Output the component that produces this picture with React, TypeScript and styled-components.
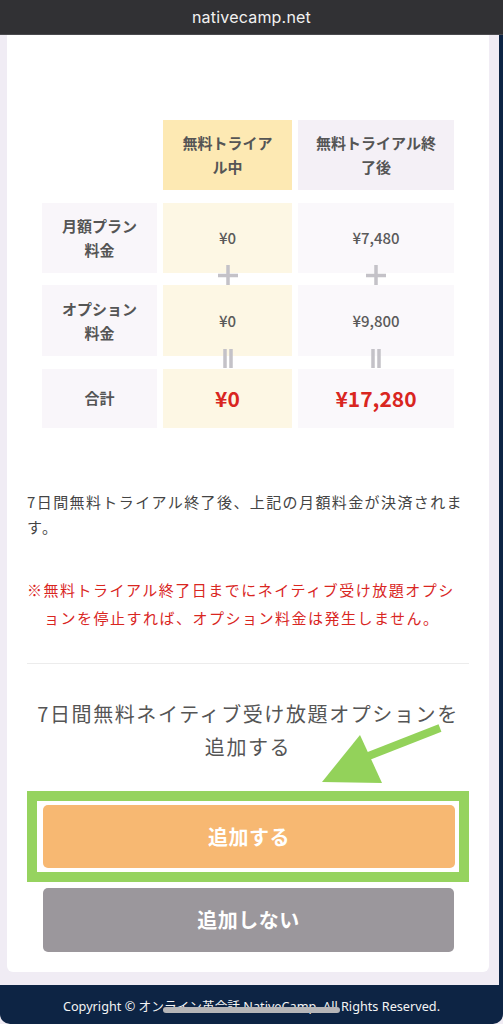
import styled, { createGlobalStyle } from "styled-components";

const GlobalStyle = createGlobalStyle`
  html, body {
    margin: 0;
    padding: 0;
    background: #000;
  }
  * {
    box-sizing: border-box;
  }
`;

const jp = `"Noto Sans CJK JP", "Noto Sans", sans-serif`;

const Page = styled.div`
  display: flex;
  flex-direction: column;
  width: 503px;
  height: 1024px;
  font-family: ${jp};
  background: #f0ecf4;
`;

const TopBar = styled.div`
  height: 35px;
  display: flex;
  align-items: center;
  justify-content: center;
  background: #313134;
  border-bottom: 1px solid #4a4a4e;
  color: #f1f1f1;
  font-family: Inter, "Noto Sans", sans-serif;
  font-size: 16px;
  letter-spacing: 0.2px;
`;

const Main = styled.div`
  flex: 1;
  display: flex;
  padding: 0 10px 13px 7px;
  border-right: 4px solid #0d2444;
`;

const Card = styled.div`
  flex: 1;
  display: flex;
  flex-direction: column;
  background: #fff;
  border-radius: 0 0 6px 6px;
  padding: 85px 20px 20px;
`;

const Table = styled.div`
  display: grid;
  grid-template-columns: 115px 129px 156px;
  grid-template-rows: 70px 70px 71px 59px;
  column-gap: 6px;
  row-gap: 12.5px;
  margin: 0 auto;
`;

const cellBg = {
  label: "#f9f6fa",
  trial: "#fdf7e4",
  after: "#faf8fb",
  trialHead: "#fde9b3",
  afterHead: "#f4f0f6",
  none: "transparent",
};

const Cell = styled.div<{ $bg: keyof typeof cellBg }>`
  position: relative;
  display: flex;
  align-items: center;
  justify-content: center;
  padding: 0 16px;
  background: ${(p) => cellBg[p.$bg]};
  text-align: center;
  color: #555;
  font-size: 15px;
  font-weight: 700;
  line-height: 24px;
`;

const Value = styled.span<{ $total?: boolean }>`
  font-size: ${(p) => (p.$total ? "21px" : "15px")};
  font-weight: ${(p) => (p.$total ? 700 : 500)};
  color: ${(p) => (p.$total ? "#d9261f" : "#5a5a5a")};
`;

const Sign = styled.svg<{ $offset: number }>`
  position: absolute;
  left: 50%;
  bottom: ${(p) => p.$offset}px;
  transform: translateX(-50%);
`;

const Plus = () => (
  <Sign $offset={-13} width="20" height="21" viewBox="0 0 20 21">
    <path d="M10 0v21M0 10.5h20" stroke="#c4c2c8" strokeWidth="3.5" />
  </Sign>
);

const Equals = () => (
  <Sign $offset={-12} width="10" height="19" viewBox="0 0 10 19">
    <path d="M2 0v19M8 0v19" stroke="#c4c2c8" strokeWidth="3.5" />
  </Sign>
);

const Note = styled.p`
  margin: 61px 0 0;
  color: #444;
  font-size: 15px;
  line-height: 25px;
  letter-spacing: 1.4px;
`;

const Warning = styled.p`
  margin: 37px 0 0;
  padding-left: 17px;
  text-indent: -17px;
  color: #d9261f;
  font-size: 15px;
  line-height: 28px;
  letter-spacing: 1.5px;
`;

const Divider = styled.hr`
  margin: 31px 0 0;
  border: none;
  border-top: 1px solid #ececec;
`;

const ActionArea = styled.div`
  position: relative;
  margin-top: 33px;
`;

const Title = styled.h2`
  margin: 0;
  text-align: center;
  color: #555;
  font-size: 20px;
  font-weight: 400;
  line-height: 33px;
  letter-spacing: 1.6px;
`;

const Highlight = styled.div`
  margin-top: 28px;
  border: 10px solid #96d35f;
  padding: 4px 4px 4px 6px;
`;

const Button = styled.button<{ $variant: "add" | "skip" }>`
  display: flex;
  align-items: center;
  justify-content: center;
  width: 100%;
  height: ${(p) => (p.$variant === "add" ? "63px" : "64px")};
  border: none;
  border-radius: 5px;
  background: ${(p) => (p.$variant === "add" ? "#f7b872" : "#9b979c")};
  color: #fff;
  font-family: ${jp};
  font-size: 20px;
  font-weight: 700;
  letter-spacing: 0.5px;
  cursor: pointer;
`;

const SkipWrap = styled.div`
  margin: 6px 15px 0 16px;
`;

const Arrow = styled.svg`
  position: absolute;
  left: 273px;
  top: 23px;
`;

const Footer = styled.div`
  position: relative;
  height: 39px;
  display: flex;
  align-items: center;
  justify-content: center;
  padding-top: 2px;
  background: #0d2444;
  color: #f4f4f4;
  font-family: "Noto Sans", "Noto Sans CJK JP", sans-serif;
  font-size: 12.7px;
  border-radius: 0 0 10px 10px;
`;

const HomeIndicator = styled.div`
  position: absolute;
  left: 163px;
  top: 22px;
  width: 177px;
  height: 6px;
  border-radius: 3px;
  background: #b6b6b8;
`;

export default function App() {
  return (
    <Page>
      <GlobalStyle />
      <TopBar>nativecamp.net</TopBar>
      <Main>
        <Card>
          <Table>
            <Cell $bg="none" />
            <Cell $bg="trialHead">無料トライアル中</Cell>
            <Cell $bg="afterHead">無料トライアル終了後</Cell>

            <Cell $bg="label">月額プラン料金</Cell>
            <Cell $bg="trial">
              <Value>¥0</Value>
              <Plus />
            </Cell>
            <Cell $bg="after">
              <Value>¥7,480</Value>
              <Plus />
            </Cell>

            <Cell $bg="label">オプション料金</Cell>
            <Cell $bg="trial">
              <Value>¥0</Value>
              <Equals />
            </Cell>
            <Cell $bg="after">
              <Value>¥9,800</Value>
              <Equals />
            </Cell>

            <Cell $bg="label">合計</Cell>
            <Cell $bg="trial">
              <Value $total>¥0</Value>
            </Cell>
            <Cell $bg="after">
              <Value $total>¥17,280</Value>
            </Cell>
          </Table>

          <Note>7日間無料トライアル終了後、上記の月額料金が決済されます。</Note>
          <Warning>
            ※無料トライアル終了日までにネイティブ受け放題オプシ
            <br />
            ョンを停止すれば、オプション料金は発生しません。
          </Warning>

          <Divider />

          <ActionArea>
            <Title>7日間無料ネイティブ受け放題オプションを追加する</Title>
            <Highlight>
              <Button $variant="add">追加する</Button>
            </Highlight>
            <SkipWrap>
              <Button $variant="skip">追加しない</Button>
            </SkipWrap>
            <Arrow width="150" height="70" viewBox="0 0 150 70">
              <path d="M66 37L140 8" stroke="#93d25a" strokeWidth="8" strokeLinecap="butt" />
              <path d="M22 62L60 15L82 63Z" fill="#93d25a" />
            </Arrow>
          </ActionArea>
        </Card>
      </Main>
      <Footer>
        Copyright © オンライン英会話 NativeCamp. All Rights Reserved.
        <HomeIndicator />
      </Footer>
    </Page>
  );
}
